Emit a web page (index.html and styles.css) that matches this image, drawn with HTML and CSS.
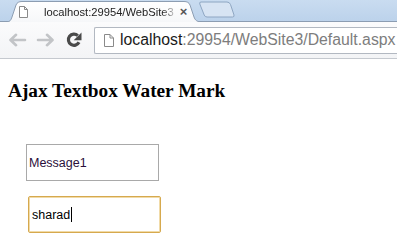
FILE: index.html
```html
<!DOCTYPE html>
<html>
<head>
<meta charset="utf-8">
<title>Default.aspx</title>
<link rel="stylesheet" href="styles.css">
</head>
<body>
<div class="chrome">
  <div class="tabstrip">
    <div class="tab">
      <svg class="tab-bg" width="196" height="21" viewBox="0 0 196 21">
        <defs>
          <linearGradient id="tg" x1="0" y1="0" x2="0" y2="1">
            <stop offset="0" stop-color="#ffffff"/>
            <stop offset="1" stop-color="#f6f7f9"/>
          </linearGradient>
        </defs>
        <path d="M0,21 C4,21 5,19 6,16 L10,4 C11,1.5 13,0.5 16,0.5 L178,0.5 C181,0.5 183,1.5 184,4 L188,16 C189,19 191,21 196,21" fill="url(#tg)" stroke="#8c9db2" stroke-width="1"/>
      </svg>
      <svg class="doc-icon" width="9" height="12" viewBox="0 0 9 12">
        <path d="M0.5,0.5 H5.5 L8.5,3.5 V11.5 H0.5 Z M5.5,0.5 V3.5 H8.5" fill="#fff" stroke="#8a8a8a" stroke-width="1"/>
      </svg>
      <span class="tab-title">localhost:29954/WebSite3</span>
      <span class="tab-close">×</span>
    </div>
    <svg class="newtab" width="36" height="17" viewBox="0 0 36 17">
      <path d="M2,1 L28,1 Q30.5,1 31.5,3.5 L35,14 Q35.5,16 33.5,16 L8,16 Q6,16 5.2,14 L0.8,3 Q0.2,1 2,1 Z" fill="#d7e4f3" stroke="#8ea6c2" stroke-width="1"/>
    </svg>
  </div>
  <div class="toolbar">
    <svg class="btn back" width="20" height="14" viewBox="0 0 20 14">
      <path d="M18,7 H4 M9,1.8 L3.5,7 L9,12.2" fill="none" stroke="#c2c4c7" stroke-width="2.6" stroke-linecap="round" stroke-linejoin="round"/>
    </svg>
    <svg class="btn fwd" width="20" height="14" viewBox="0 0 20 14">
      <path d="M2,7 H16 M11,1.8 L16.5,7 L11,12.2" fill="none" stroke="#c2c4c7" stroke-width="2.6" stroke-linecap="round" stroke-linejoin="round"/>
    </svg>
    <svg class="btn reload" width="18" height="18" viewBox="0 0 18 18">
      <path d="M14,11.3 A5.6,5.6 0 1 1 12.8,4.6" fill="none" stroke="#4a4a4a" stroke-width="3.2"/>
      <path d="M16.5,1.5 L16.5,9.3 L8.7,9.3 Z" fill="#4a4a4a"/>
    </svg>
    <div class="omnibox">
      <svg class="doc-icon omni-doc" width="10" height="13" viewBox="0 0 10 13">
        <path d="M0.5,0.5 H6 L9.5,4 V12.5 H0.5 Z M6,0.5 V4 H9.5" fill="#fff" stroke="#8a8a8a" stroke-width="1"/>
      </svg>
      <span class="url"><span class="host">localhost</span>:29954/WebSite3/Default.aspx</span>
    </div>
  </div>
</div>
<div class="page">
  <h3 class="title">Ajax Textbox Water Mark</h3>
  <div class="fields">
    <div class="textbox watermark">Message1</div>
    <div class="textbox focused">sharad<span class="caret"></span></div>
  </div>
</div>
</body>
</html>
```
FILE: styles.css
```css
html, body {
  margin: 0;
  padding: 0;
  background: #ffffff;
}
body {
  width: 397px;
  height: 238px;
  overflow: hidden;
}
.chrome {
  font-family: "Liberation Sans", Arial, sans-serif;
}
.tabstrip {
  height: 22px;
  background: linear-gradient(#c9dcf0, #bcd2eb);
  display: flex;
  align-items: flex-end;
  box-sizing: border-box;
  border-bottom: 1px solid #8c9db2;
}
.tab {
  position: relative;
  width: 196px;
  height: 21px;
  margin-left: 6px;
  margin-bottom: -1px;
  display: flex;
  align-items: center;
}
.tab-bg {
  position: absolute;
  left: 0;
  top: 0;
}
.doc-icon {
  display: block;
  position: relative;
}
.tab .doc-icon {
  margin-left: 13px;
}
.tab-title {
  position: relative;
  margin-left: 16px;
  font-size: 11.2px;
  color: #222;
  white-space: nowrap;
  -webkit-mask-image: linear-gradient(to right, #000 118px, rgba(0,0,0,0.25) 130px);
  mask-image: linear-gradient(to right, #000 118px, rgba(0,0,0,0.25) 130px);
}
.tab-close {
  position: relative;
  margin-left: 6px;
  font-size: 13px;
  font-weight: bold;
  color: #555;
}
.newtab {
  display: block;
  margin-left: -3px;
  margin-bottom: 3px;
}
.toolbar {
  height: 37px;
  box-sizing: border-box;
  background: linear-gradient(#fbfbfc, #f3f4f6);
  border-bottom: 1px solid #c5c9cf;
  display: flex;
  align-items: center;
}
.btn {
  display: block;
  flex: none;
}
.back {
  margin-left: 7px;
}
.fwd {
  margin-left: 9px;
}
.reload {
  margin-left: 9px;
}
.omnibox {
  margin-left: 11px;
  flex: 1;
  height: 27px;
  box-sizing: border-box;
  background: #fff;
  border: 1px solid #b2b8c1;
  border-right: none;
  border-radius: 2px 0 0 2px;
  display: flex;
  align-items: center;
  overflow: hidden;
}
.omni-doc {
  margin-left: 9px;
}
.url {
  margin-left: 6px;
  font-size: 15.8px;
  color: #7d7d7d;
  white-space: nowrap;
}
.host {
  color: #1a1a1a;
}
.page {
  padding: 0 8px;
}
.title {
  margin: 21px 0 0 0;
  font-family: "Liberation Serif", "Times New Roman", serif;
  font-size: 19.3px;
  line-height: 22px;
  font-weight: bold;
  color: #000;
}
.fields {
  margin-top: 42px;
  display: flex;
  flex-direction: column;
  align-items: flex-start;
  gap: 15px;
}
.textbox {
  box-sizing: border-box;
  width: 133px;
  height: 37px;
  padding-left: 2px;
  display: flex;
  align-items: center;
  font-family: "Liberation Sans", Arial, sans-serif;
  font-size: 12.5px;
  background: #fff;
}
.watermark {
  margin-left: 18px;
  border: 1px solid #a9a9a9;
  color: #2a0f3a;
}
.focused {
  margin-left: 20px;
  border: 1px solid #d6a94e;
  box-shadow: inset 0 0 0 1px #f1dba8;
  border-radius: 2px;
  padding-left: 3px;
  color: #000;
}
.caret {
  display: inline-block;
  width: 1px;
  height: 15px;
  margin-left: 1px;
  background: #000;
}
```
